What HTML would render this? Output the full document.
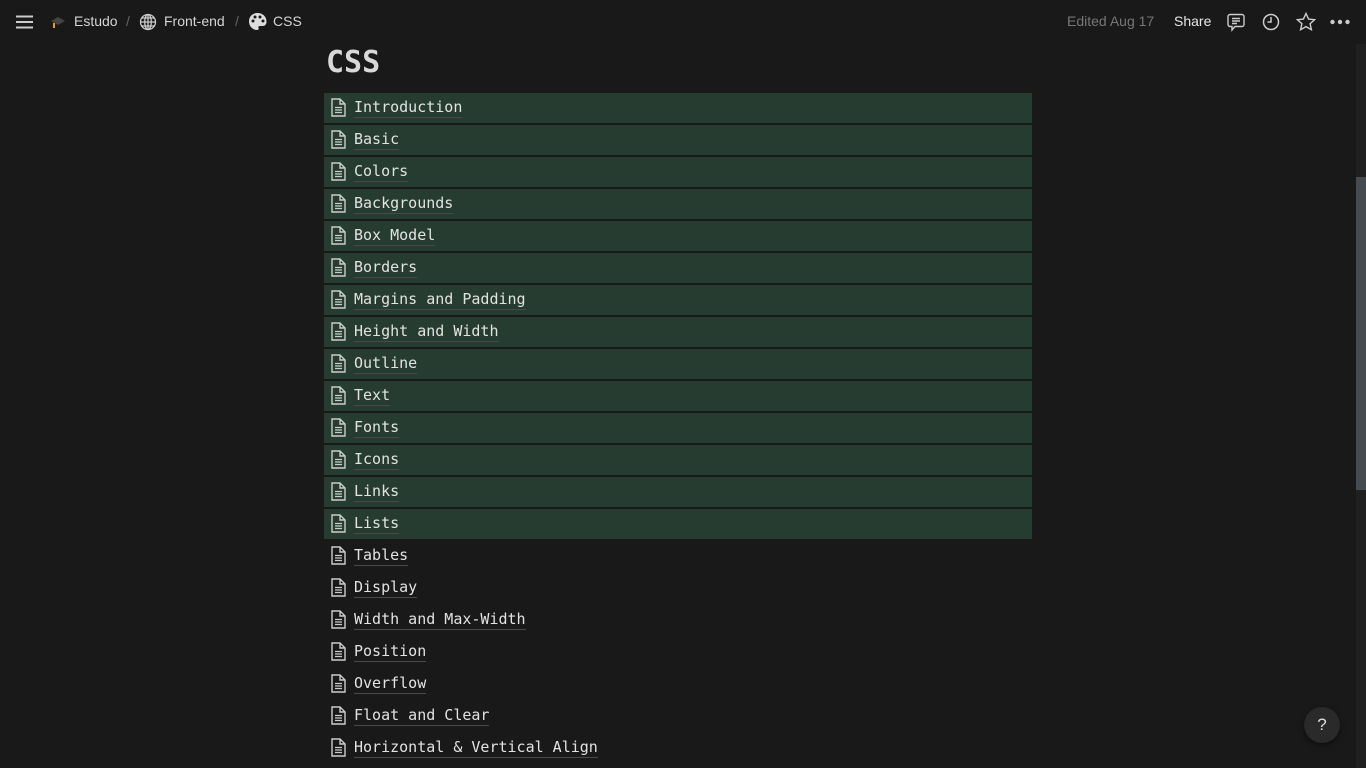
<!DOCTYPE html>
<html><head><meta charset="utf-8"><style>
body{margin:0;width:1366px;height:768px;background:#191919;overflow:hidden;font-family:"Liberation Sans",sans-serif;color:#d4d4d4;position:relative}
.top{position:absolute;top:0;left:0;right:0;height:44px}
.bc{position:absolute;top:13px;font-size:14px;color:#d4d4d4}
.sep{color:#666}
h1{position:absolute;left:326px;top:45px;margin:0;font-family:"DejaVu Sans Mono",monospace;font-size:30px;font-weight:bold;color:#d8d8d8}
.row{position:absolute;left:324px;width:708px;height:30px}
.row.g{background:#263c30}
.row span{position:absolute;left:30px;top:5px;font-family:"DejaVu Sans Mono",monospace;font-size:15px;color:#e2e2e2;border-bottom:1px solid #4a4a4a;line-height:19px}
.row svg{position:absolute;left:7px;top:5px}
.sb{position:absolute;right:0;top:44px;width:10px;height:724px;background:#202020}
.th{position:absolute;right:0;top:133px;width:10px;height:313px;background:#454b4e}
.help{position:absolute;left:1304px;top:707px;width:36px;height:36px;border-radius:50%;background:#2a2a2a;color:#ddd;font-size:17px;text-align:center;line-height:36px;box-shadow:0 2px 6px rgba(0,0,0,.5)}
</style></head><body>
<div class="top">
<svg style="position:absolute;left:16px;top:15px" width="17" height="14"><path d="M0 1.5h17M0 7h17M0 12.5h17" stroke="#ccc" stroke-width="2"/></svg>
<svg style="position:absolute;left:50px;top:15px" width="16" height="15"><path d="M1 6l7-4 7 4-7 4z" fill="#444"/><path d="M4 8v5" stroke="#e8a020" stroke-width="2"/></svg>
<div class="bc" style="left:74px">Estudo</div><div class="bc sep" style="left:126px">/</div>
<svg style="position:absolute;left:139px;top:13px" width="18" height="18" fill="none" stroke="#ccc" stroke-width="1.3"><circle cx="9" cy="9" r="7.5"/><ellipse cx="9" cy="9" rx="3.3" ry="7.5"/><path d="M1.5 9h15M3 5h12M3 13h12M9 1.5v15"/></svg>
<div class="bc" style="left:164px">Front-end</div><div class="bc sep" style="left:235px">/</div>
<svg style="position:absolute;left:248px;top:12px" width="19" height="19"><path d="M9.5 1C4.5 1 1 4.5 1 9.5s4 8.5 8 8.5c1.5 0 2-1 1.5-2s0-2 1.5-2h2.5c2.5 0 4-1.5 4-4.5C18.5 4.5 14.5 1 9.5 1z" fill="#ddd"/><circle cx="5" cy="9" r="1.5" fill="#191919"/><circle cx="7" cy="5" r="1.5" fill="#191919"/><circle cx="12" cy="5" r="1.5" fill="#191919"/><circle cx="15" cy="9" r="1.5" fill="#191919"/></svg>
<div class="bc" style="left:273px">CSS</div>
<div class="bc" style="left:1067px;color:#777">Edited Aug 17</div>
<div class="bc" style="left:1174px;color:#e6e6e6">Share</div>
<svg style="position:absolute;left:1227px;top:13px" width="18" height="19" fill="none" stroke="#ccc" stroke-width="1.4"><path d="M3 1.5h12a2 2 0 0 1 2 2v8a2 2 0 0 1-2 2H8l-3 3.5v-3.5H3a2 2 0 0 1-2-2v-8a2 2 0 0 1 2-2z"/><path d="M5 5.5h8M5 8h8M5 10.5h5"/></svg>
<svg style="position:absolute;left:1262px;top:13px" width="18" height="18" fill="none" stroke="#ccc" stroke-width="1.5"><circle cx="9" cy="9" r="7.5"/><path d="M9 4v5H5.5"/></svg>
<svg style="position:absolute;left:1296px;top:12px" width="20" height="19" fill="none" stroke="#ccc" stroke-width="1.4"><path d="M10 1.5l2.6 5.6 6 .6-4.5 4 1.3 6-5.4-3.1-5.4 3.1 1.3-6-4.5-4 6-.6z"/></svg>
<svg style="position:absolute;left:1330px;top:19px" width="20" height="6" fill="#ccc"><circle cx="2.5" cy="3" r="2.2"/><circle cx="10" cy="3" r="2.2"/><circle cx="17.5" cy="3" r="2.2"/></svg>
</div>
<h1>CSS</h1>
<div id="list"></div>
<div class="sb"><div class="th"></div></div>
<div class="help">?</div>
<script>
var items=["Introduction","Basic","Colors","Backgrounds","Box Model","Borders","Margins and Padding","Height and Width","Outline","Text","Fonts","Icons","Links","Lists","Tables","Display","Width and Max-Width","Position","Overflow","Float and Clear","Horizontal &amp; Vertical Align"];
var h="";
var ic='<svg width="15" height="19" fill="none" stroke="#ccc" stroke-width="1.4"><path d="M1 1h8l5 5v12H1z M9 1v5h5"/><path d="M4 9.5h7M4 12h7M4 14.5h7" stroke-width="1.3"/></svg>';
items.forEach(function(t,i){h+='<div class="row'+(i<14?' g':'')+'" style="top:'+(93+i*32)+'px">'+ic+'<span>'+t.replace(/ /g,"&nbsp;")+'</span></div>';});
document.getElementById("list").innerHTML=h;
</script>
</body></html>
